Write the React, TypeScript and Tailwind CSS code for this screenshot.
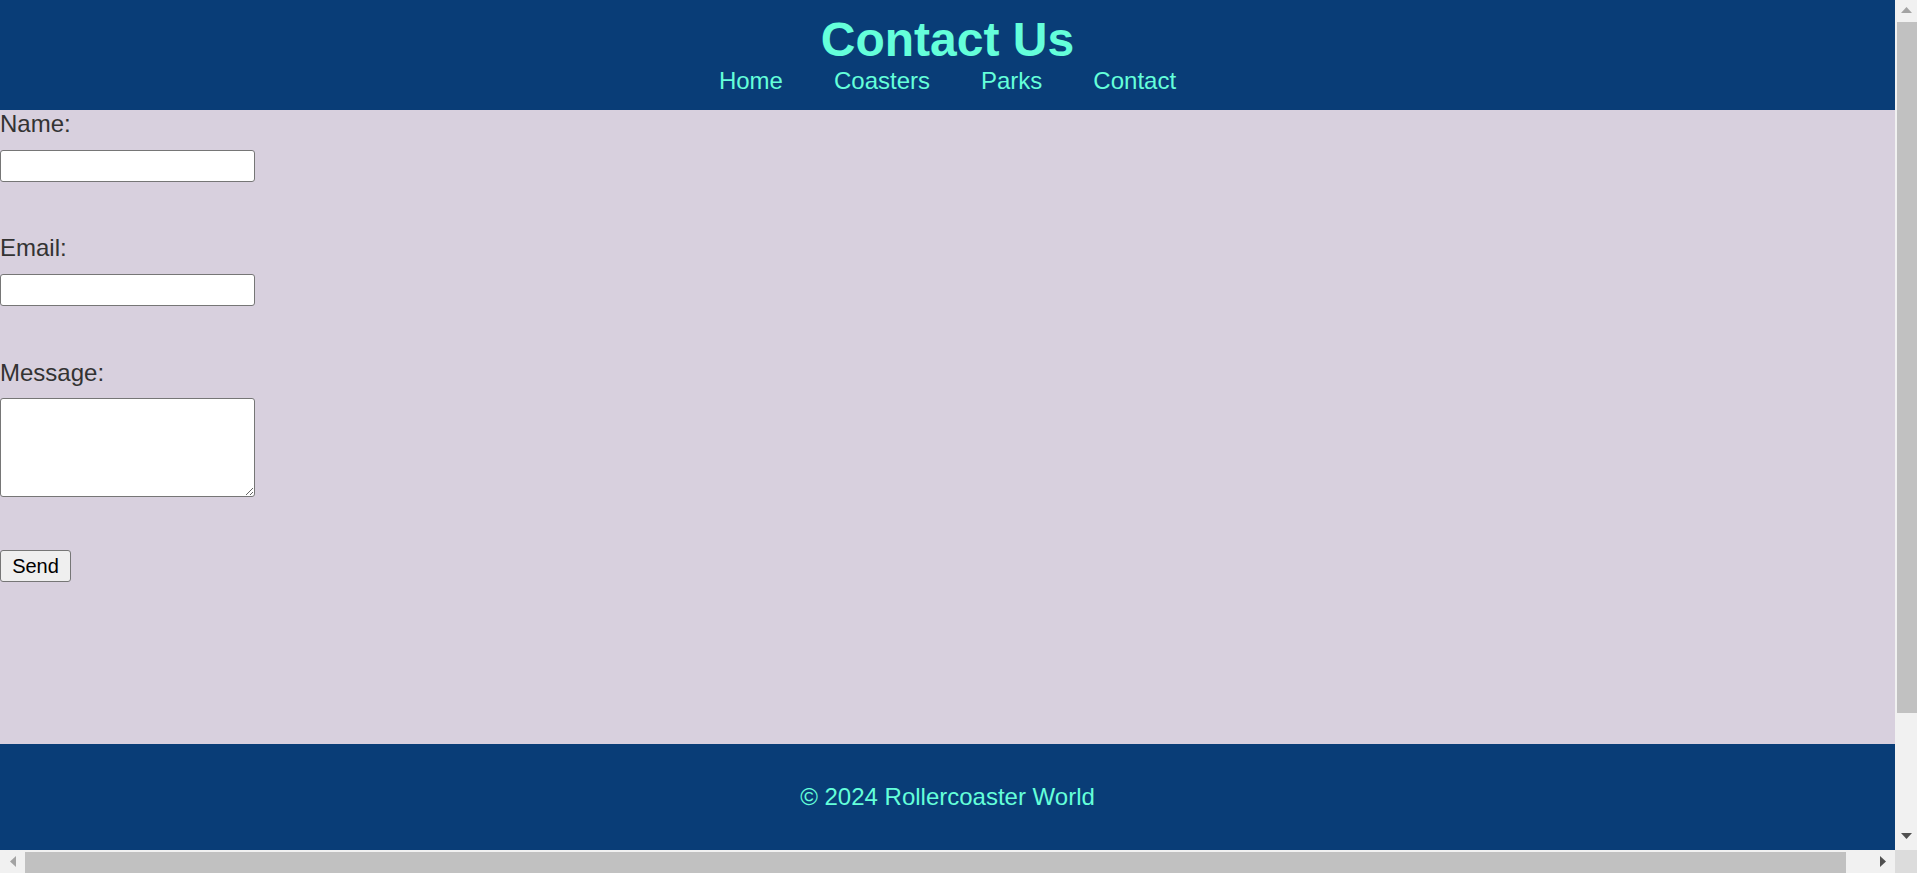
const navItems = ["Home", "Coasters", "Parks", "Contact"];

function Arrow({ dir, color }: { dir: "up" | "down" | "left" | "right"; color: string }) {
	const points = {
		up: "0,6 5.5,0 11,6",
		down: "0,0 11,0 5.5,6",
		left: "6,0 6,11 0,5.5",
		right: "0,0 0,11 6,5.5",
	}[dir];
	const vertical = dir === "up" || dir === "down";
	return (
		<svg width={vertical ? 11 : 6} height={vertical ? 6 : 11} viewBox={vertical ? "0 0 11 6" : "0 0 6 11"}>
			<polygon points={points} fill={color} />
		</svg>
	);
}

export default function App() {
	return (
		<div className="flex flex-col h-[873px] w-[1917px] overflow-hidden font-['Liberation_Sans',Arial,sans-serif]">
			<div className="flex h-[850px]">
				<div className="flex-1 flex flex-col overflow-hidden">
					<header className="h-[110px] shrink-0 bg-[#093d77] flex flex-col items-center pt-[16px] text-[#64ffda]">
						<h1 className="text-[48px] leading-[48px] font-bold">Contact Us</h1>
						<nav className="mt-[5px] flex gap-[51px] text-[24px] leading-[24px]">
							{navItems.map((item) => (
								<a key={item} href="#">{item}</a>
							))}
						</nav>
					</header>
					<main className="h-[634px] shrink-0 bg-[#d8d0de] text-[#333333] text-[24px]">
						<form className="flex flex-col items-start" onSubmit={(e) => e.preventDefault()}>
							<label className="leading-[28px]">Name:</label>
							<input type="text" className="mt-[12px] h-[32px] w-[255px] bg-white border border-[#767676] rounded-[3px]" />
							<label className="mt-[52px] leading-[28px]">Email:</label>
							<input type="email" className="mt-[12px] h-[32px] w-[255px] bg-white border border-[#767676] rounded-[3px]" />
							<label className="mt-[53px] leading-[28px]">Message:</label>
							<textarea className="mt-[11px] h-[99px] w-[255px] bg-white border border-[#767676] rounded-[3px] resize" />
							<button type="submit" className="mt-[53px] h-[32px] w-[71px] bg-[#efefef] border border-[#767676] rounded-[3px] text-[20px] text-black">
								Send
							</button>
						</form>
					</main>
					<footer className="h-[106px] shrink-0 bg-[#093d77] text-[#64ffda] text-[24px] leading-[28px] text-center pt-[39px]">
						© 2024 Rollercoaster World
					</footer>
				</div>
				<div className="w-[22px] shrink-0 bg-[#f1f1f1] flex flex-col">
					<div className="h-[22px] flex items-center justify-center pb-[2px]">
						<Arrow dir="up" color="#a3a3a3" />
					</div>
					<div className="h-[691px] ml-[2px] bg-[#c1c1c1]" />
					<div className="flex-1 flex items-end justify-center pb-[11px]">
						<Arrow dir="down" color="#505050" />
					</div>
				</div>
			</div>
			<div className="h-[23px] flex bg-[#f1f1f1]">
				<div className="w-[25px] flex items-center justify-center">
					<Arrow dir="left" color="#a3a3a3" />
				</div>
				<div className="w-[1821px] mt-[2px] bg-[#c1c1c1]" />
				<div className="w-[49px] flex items-center justify-end pr-[9px]">
					<Arrow dir="right" color="#505050" />
				</div>
				<div className="w-[22px] bg-[#dcdcdc]" />
			</div>
		</div>
	);
}
